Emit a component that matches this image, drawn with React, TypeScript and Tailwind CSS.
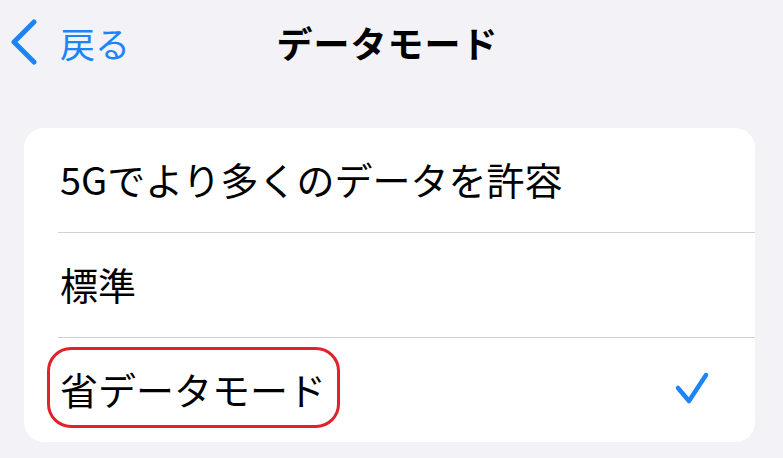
import React from 'react';

const font = { fontFamily: '"Noto Sans CJK JP", "Noto Sans", sans-serif' };

const rows = [
  { id: 1, label: '5Gでより多くのデータを許容', checked: false, marked: false },
  { id: 2, label: '標準', checked: false, marked: false },
  { id: 3, label: '省データモード', checked: true, marked: true },
];

const App = () => {
  return (
    <div className="w-full h-[458px] bg-[#f2f2f7] overflow-hidden" style={font}>
      {/* nav bar */}
      <div className="grid grid-cols-[1fr_auto_1fr] items-center h-[84px]">
        <div className="flex items-center pl-[10px] gap-[22px] text-[#1c84f6]">
          <svg width="28" height="46" viewBox="0 0 28 46" fill="none">
            <path d="M24 3 L4 23 L24 43" stroke="#1c84f6" strokeWidth="5" strokeLinecap="round" strokeLinejoin="round" />
          </svg>
          <span className="text-[35px] leading-none">戻る</span>
        </div>
        <h1 className="text-[36px] font-bold text-black leading-none tracking-[1px] -ml-[8px]">データモード</h1>
        <div />
      </div>

      {/* list */}
      <div className="ml-[24px] mr-[28px] mt-[44px] bg-white rounded-[20px] overflow-hidden">
        {rows.map((row, i) => (
          <div key={row.id}>
            {i > 0 && <div className="ml-[34px] h-px bg-[#d0d0d4]" />}
            <div className="flex items-center justify-between h-[104px] pl-[36px] pr-[44px]">
              <span className="relative text-[38px] text-black leading-none -mt-[3px]">
                {row.label}
                {row.marked && (
                  <span className="absolute -left-[13px] -right-[14px] -top-[23px] -bottom-[20px] border-[3px] border-[#e0222b] rounded-[24px]" />
                )}
              </span>
              {row.checked && (
                <svg width="40" height="40" viewBox="0 0 40 40" fill="none" className="-mt-[4px]">
                  <path d="M7 20 L18 33 L35 7" stroke="#1c84f6" strokeWidth="4.5" strokeLinecap="round" strokeLinejoin="round" />
                </svg>
              )}
            </div>
          </div>
        ))}
      </div>
    </div>
  );
};

export default App;
